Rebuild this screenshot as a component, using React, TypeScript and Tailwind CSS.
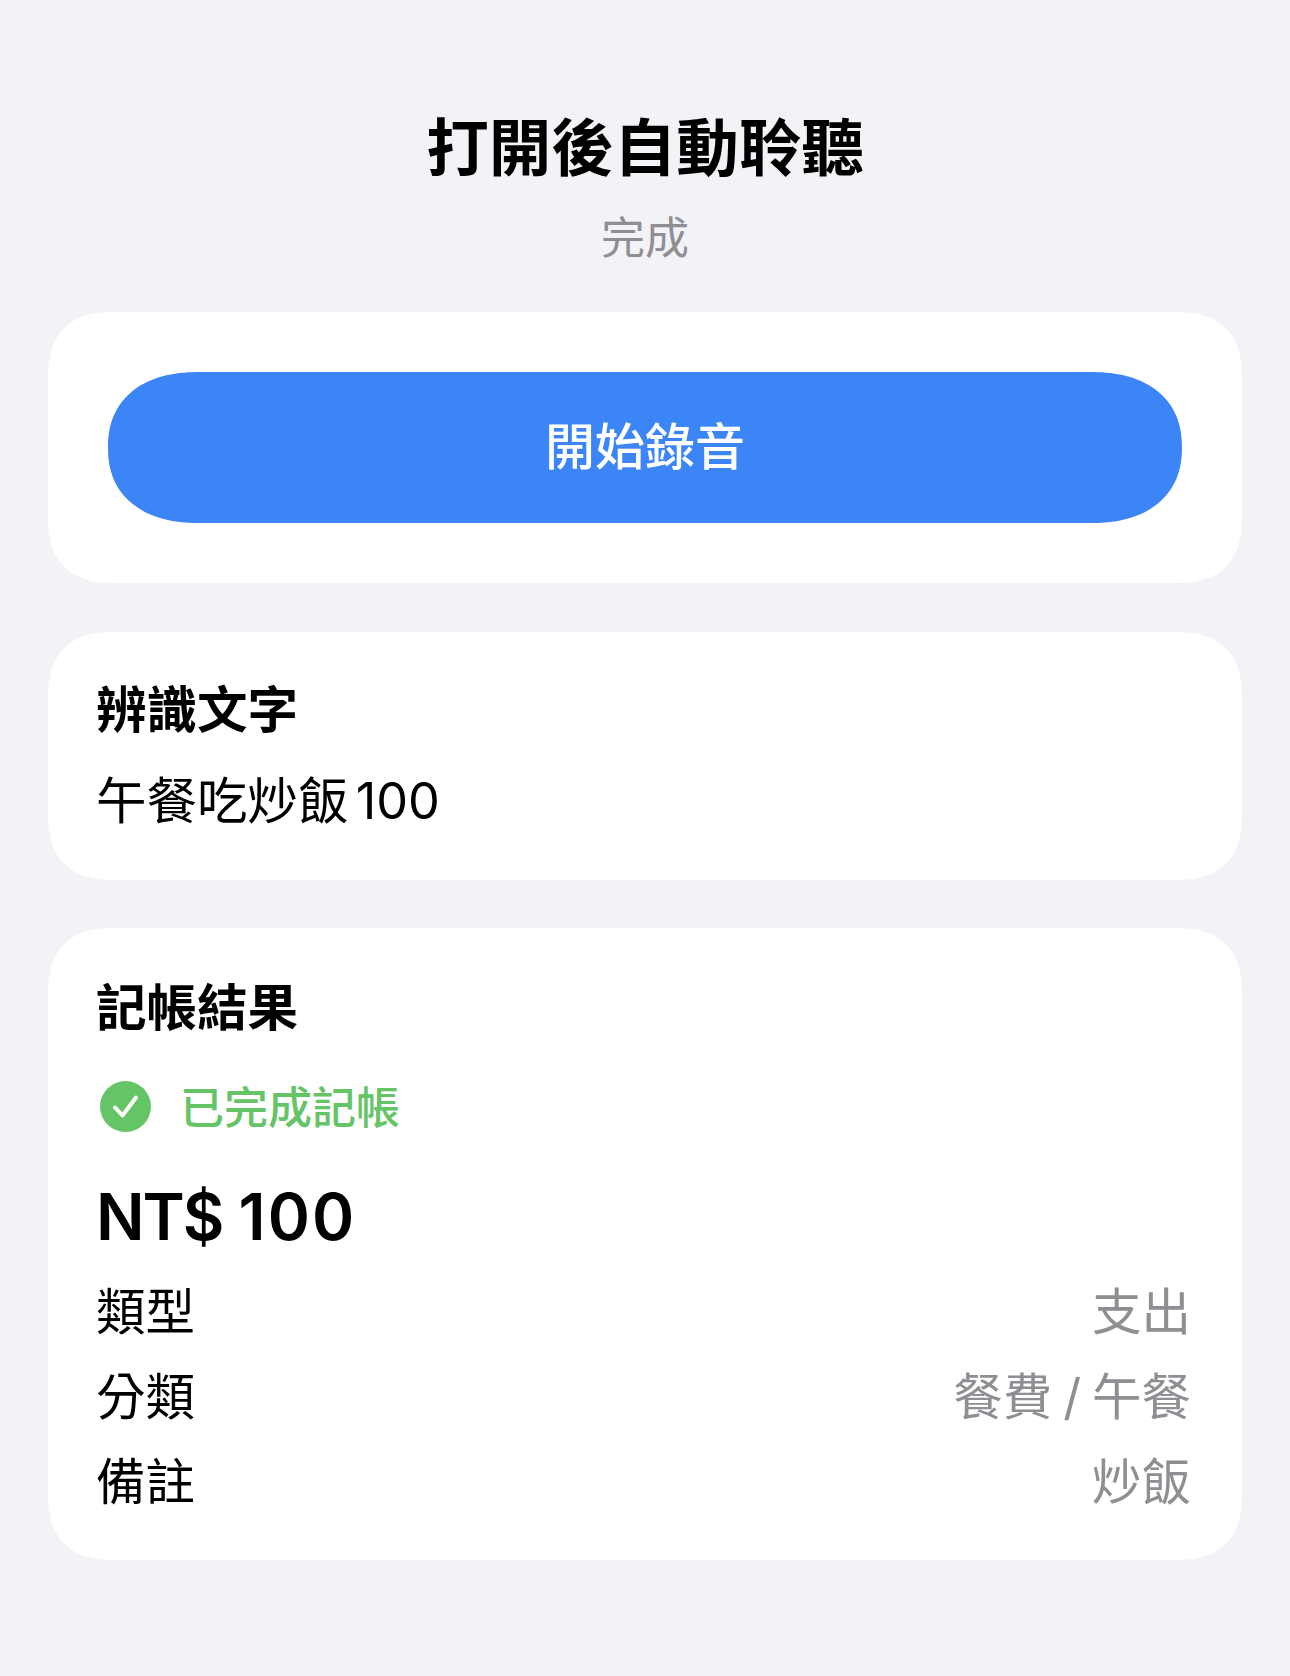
const font = "font-['Inter','Noto_Sans_CJK_TC',sans-serif]";
const card = "rounded-[68px] [corner-shape:superellipse(1.35)] bg-white";

function DetailRow({ label, value }: { label: string; value: string }) {
  return (
    <div className="flex h-[85px] items-center justify-between text-[49.5px] leading-[60px]">
      <span className="text-black">{label}</span>
      <span className="text-[#8e8e93] [word-spacing:-3px]">{value}</span>
    </div>
  );
}

export default function App() {
  return (
    <div className={`${font} flex h-[1676px] w-[1290px] flex-col overflow-hidden bg-[#f2f2f7] px-12 pt-[111px]`}>
      <h1 className="text-center text-[62.5px] leading-[74px] font-bold text-black">打開後自動聆聽</h1>
      <p className="mt-[27px] text-center text-[44px] leading-[52px] text-[#8e8e93]">完成</p>

      <div className={`${card} mt-[48px] p-[60px]`}>
        <button className="flex h-[151px] w-full items-center justify-center rounded-[92px/76px] [corner-shape:superellipse(1.2)] bg-[#3c85f6] text-[50px] font-medium text-white">
          開始錄音
        </button>
      </div>

      <div className={`${card} mt-[49px] h-[248px] pr-[51px] pl-[48px] pt-[48px]`}>
        <h2 className="text-[50.5px] leading-[60px] font-bold text-black">辨識文字</h2>
        <p className="mt-[31px] text-[50.5px] leading-[60px] text-black [word-spacing:-7px]">午餐吃炒飯 100</p>
      </div>

      <div className={`${card} mt-[48px] h-[632px] pr-[51px] pl-[48px] pt-[50px]`}>
        <h2 className="text-[50.5px] leading-[60px] font-bold text-black">記帳結果</h2>
        <div className="mt-[40px] flex items-center gap-[29px] pl-[4px]">
          <svg width="51" height="51" viewBox="0 0 51 51">
            <circle cx="25.5" cy="25.5" r="25.5" fill="#65c466" />
            <path d="M15 26.5l7.5 8 13.5-18" fill="none" stroke="#fff" strokeWidth="4" strokeLinecap="round" strokeLinejoin="round" />
          </svg>
          <span className="pt-[4px] text-[44px] leading-[52px] font-medium text-[#65c466]">已完成記帳</span>
        </div>
        <p className="mt-[45px] text-[64px] leading-[76px] font-semibold text-black">
          <span className="tracking-[-2px]">NT$</span> <span className="tracking-[2px]">100</span>
        </p>
        <div className="mt-[14px]">
          <DetailRow label="類型" value="支出" />
          <DetailRow label="分類" value="餐費 / 午餐" />
          <DetailRow label="備註" value="炒飯" />
        </div>
      </div>
    </div>
  );
}
